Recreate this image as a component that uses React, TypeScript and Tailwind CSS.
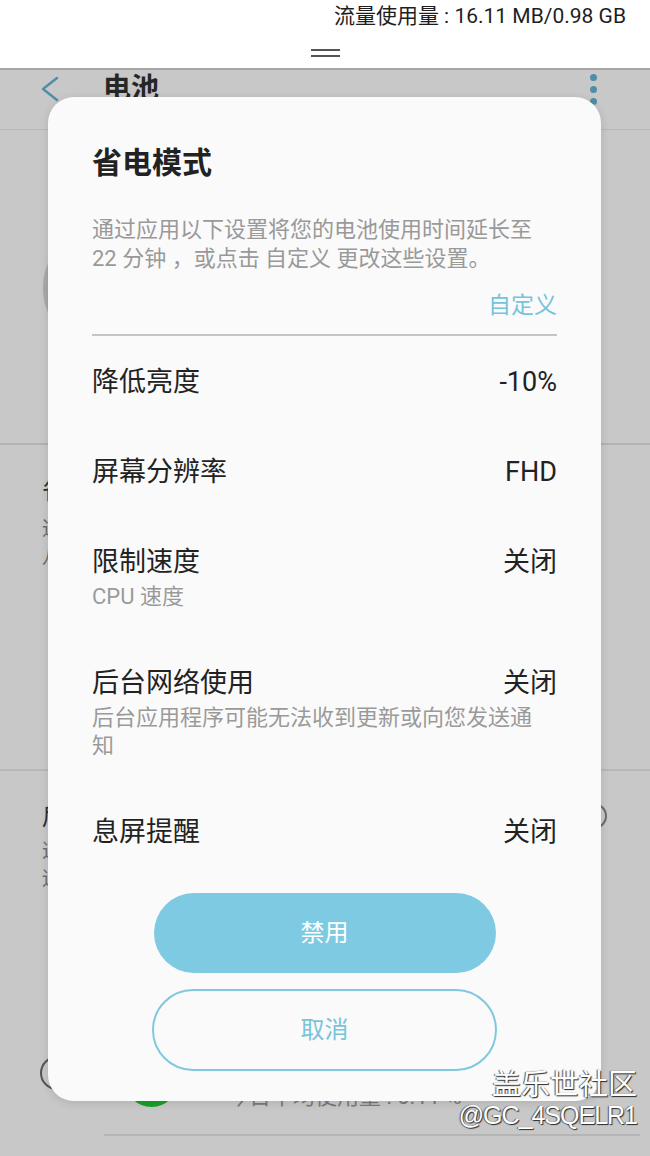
import React from "react";

interface SettingRow {
  label: string;
  value: string;
  sub?: string;
}

const rows: SettingRow[] = [
  { label: "降低亮度", value: "-10%" },
  { label: "屏幕分辨率", value: "FHD" },
  { label: "限制速度", value: "关闭", sub: "CPU 速度" },
  {
    label: "后台网络使用",
    value: "关闭",
    sub: "后台应用程序可能无法收到更新或向您发送通知",
  },
  { label: "息屏提醒", value: "关闭" },
];

function BackArrow() {
  return (
    <svg width="20" height="26" viewBox="0 0 20 26" fill="none">
      <path
        d="M17 2 L3 13 L17 24"
        stroke="#4f8ea5"
        strokeWidth="2.4"
        strokeLinecap="round"
        strokeLinejoin="round"
      />
    </svg>
  );
}

function MoreDots() {
  return (
    <div className="flex flex-col items-center gap-[5px]">
      <span className="w-[7px] h-[7px] rounded-full bg-[#4f8ea5]" />
      <span className="w-[7px] h-[7px] rounded-full bg-[#4f8ea5]" />
      <span className="w-[7px] h-[7px] rounded-full bg-[#4f8ea5]" />
    </div>
  );
}

export default function App() {
  return (
    <div className="relative w-[650px] h-[1156px] overflow-hidden bg-[#c8c8c8] font-['Roboto','Noto_Sans_CJK_SC',sans-serif]">
      {/* 顶部状态栏 */}
      <div className="h-[70px] bg-white border-b-2 border-[#a6a6a6] flex flex-col">
        <div className="flex justify-end pr-[24px] pt-[3px] text-[21px] leading-[26px] text-[#1e1e1e]">
          流量使用量 : 16.11 MB/0.98 GB
        </div>
        <div className="flex justify-center mt-[20px]">
          <div className="w-[29px] flex flex-col gap-[4px]">
            <span className="h-[2px] bg-[#555]" />
            <span className="h-[2px] bg-[#555]" />
          </div>
        </div>
      </div>

      {/* 背景页面：电池 */}
      <div className="h-[59px] border-b border-[#b9b9b9]">
        <div className="h-[36px] mt-[1px] flex items-center">
          <div className="ml-[40px]">
            <BackArrow />
          </div>
          <div className="ml-[43px] text-[28px] font-bold text-[#262626]">电池</div>
          <div className="ml-auto mr-[53px]">
            <MoreDots />
          </div>
        </div>
      </div>

      <div className="h-[315px] border-b-2 border-[#b3b3b3] pt-[96px] pl-[43px]">
        <div className="w-[124px] h-[124px] rounded-full border-[5px] border-[#a9a9a9]" />
      </div>

      <div className="h-[326px] border-b-2 border-[#b8b8b8] pl-[42px] pt-[30px]">
        <div className="text-[24px] leading-[32px] text-[#2d2d2d]">省电模式</div>
        <div className="mt-[8px] text-[20px] leading-[28px] text-[#6d6d6d]">
          <p>通过应用以下设置</p>
          <p>八小时</p>
        </div>
      </div>

      <div className="h-[250px] pl-[42px] pt-[30px] pr-[43px]">
        <div className="flex items-start justify-between">
          <div>
            <div className="text-[24px] leading-[32px] text-[#2d2d2d]">后台网络</div>
            <div className="mt-[4px] text-[20px] leading-[28px] text-[#6d6d6d]">
              <p>这些设置</p>
              <p>适用于</p>
            </div>
          </div>
          <div className="w-[26px] h-[26px] mt-[2px] rounded-full border-2 border-[#6a6a6a]" />
        </div>
      </div>

      <div className="h-[113px] flex items-start">
        <div className="ml-[40px] mt-[35px] w-[34px] h-[34px] rounded-full border-2 border-[#555]" />
        <div className="ml-[51px] mt-[33px] w-[53px] h-[53px] rounded-full bg-[#18a02a]" />
        <div className="ml-[49px] mt-[62px] text-[22px] leading-[28px] text-[#7a7a7a]">
          今日平均使用量 : 0.11 %
        </div>
      </div>
      <div className="ml-[104px] mr-[10px] h-[2px] bg-[#b5b5b5]" />

      {/* 省电模式对话框 */}
      <div className="absolute left-[48px] top-[97px] w-[553px] rounded-[26px] bg-[#fafafa] shadow-[0_2px_10px_rgba(0,0,0,0.12)] pt-[46px] pb-[30px] pl-[44px] pr-[44px]">
        <h2 className="text-[30px] leading-[40px] font-bold text-[#222]">省电模式</h2>
        <p className="mt-[32px] max-w-[450px] text-[22px] leading-[29px] text-[#999]">
          通过应用以下设置将您的电池使用时间延长至 22 分钟 ，或点击 自定义 更改这些设置。
        </p>
        <div className="mt-[18px] text-right text-[23px] leading-[30px] text-[#75c4dc]">
          自定义
        </div>
        <div className="mt-[13px] h-[2px] bg-[#c4c4c4]" />

        {rows.map((row) => (
          <div key={row.label} className="pt-[28px] pb-[26px]">
            <div className="flex justify-between items-center text-[27px] leading-[36px] text-[#222]">
              <span>{row.label}</span>
              <span>{row.value}</span>
            </div>
            {row.sub && (
              <div className="mt-[3px] max-w-[450px] text-[22px] leading-[28px] text-[#9a9a9a]">
                {row.sub}
              </div>
            )}
          </div>
        ))}

        <div className="mt-[17px] flex flex-col items-center gap-[16px]">
          <button className="w-[342px] h-[80px] rounded-full bg-[#7ecae2] text-white text-[24px]">
            禁用
          </button>
          <button className="w-[345px] h-[82px] rounded-full border-2 border-[#80c8de] text-[#78c4da] text-[24px]">
            取消
          </button>
        </div>
      </div>

      {/* 水印 */}
      <div className="absolute right-[13px] top-[1064px] flex flex-col items-end text-white [text-shadow:1px_1px_1px_#2a2a2a,-1px_0_1px_#555]">
        <div className="text-[29px] leading-[36px] font-['Noto_Sans_CJK_SC',sans-serif]">盖乐世社区</div>
        <div className="text-[25px] leading-[30px] tracking-[-1px] font-['Liberation_Sans',sans-serif]">
          @GC_4SQELR1
        </div>
      </div>
    </div>
  );
}
